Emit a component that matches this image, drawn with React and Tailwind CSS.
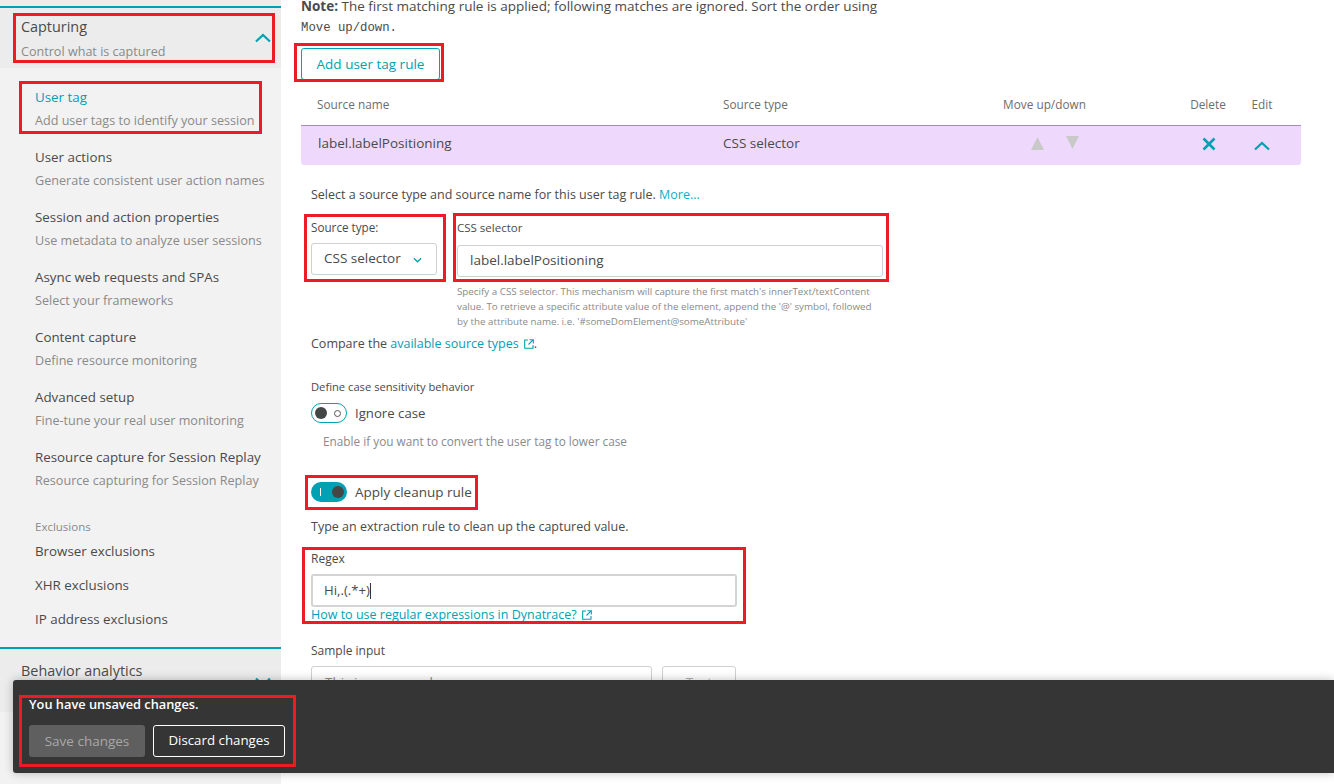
import React from "react";

const navItems = [
  ["User actions", "Generate consistent user action names"],
  ["Session and action properties", "Use metadata to analyze user sessions"],
  ["Async web requests and SPAs", "Select your frameworks"],
  ["Content capture", "Define resource monitoring"],
  ["Advanced setup", "Fine-tune your real user monitoring"],
  ["Resource capture for Session Replay", "Resource capturing for Session Replay"],
];

function Chevron({ className, down }) {
  return (
    <svg viewBox="0 0 16 10" className={className} fill="none" stroke="#00a1b2" strokeWidth="2.2">
      <path d={down ? "M1 1.5 L8 8 L15 1.5" : "M1 8.5 L8 2 L15 8.5"} />
    </svg>
  );
}

function Ext() {
  return (
    <svg viewBox="0 0 10 10" className="inline-block w-[10px] h-[10px] ml-[5px] align-[-1px]" fill="none" stroke="#00a1b2" strokeWidth="1.1">
      <path d="M4 1 H.7 V9.3 H9 V6" />
      <path d="M5.5.7 H9.3 V4.5 M9.3.7 L4.5 5.5" />
    </svg>
  );
}

function Red({ className }) {
  return <div className={"absolute border-[3px] border-[#ed1c24] pointer-events-none " + className} />;
}

export default function App() {
  return (
    <div className="relative w-[1334px] h-[784px] overflow-hidden bg-white flex font-['Open_Sans',sans-serif] text-[12.5px] text-[#4a4a4a]">
      <aside className="w-[281px] h-full shrink-0 flex flex-col bg-[#f2f2f2]">
        <div className="h-[6px] bg-[#ececec]" />
        <div className="h-[62px] bg-[#ececec] border-t-2 border-[#00a1b2] pl-[21px] pr-[10px] flex justify-between">
          <div>
            <div className="text-[14.4px] leading-[20px] mt-[9px]">Capturing</div>
            <div className="text-[12.6px] leading-[18px] mt-[6px] text-[#8a8a8a]">Control what is captured</div>
          </div>
          <Chevron className="w-[16px] h-[10px] mt-[25px]" />
        </div>
        <div className="pl-[35px] pt-[19px]">
          <div className="h-[60px] whitespace-nowrap">
            <div className="text-[13.35px] leading-[20px] text-[#00a1b2]">User tag</div>
            <div className="text-[12.6px] leading-[18px] mt-[5px] text-[#8a8a8a]">Add user tags to identify your session</div>
          </div>
          {navItems.map(([t, s]) => (
            <div key={t} className="h-[60px] whitespace-nowrap">
              <div className="text-[13.35px] leading-[20px]">{t}</div>
              <div className="text-[12.6px] leading-[18px] mt-[5px] text-[#8a8a8a]">{s}</div>
            </div>
          ))}
          <div className="text-[11.5px] leading-[16px] text-[#8a8a8a] mt-[12px]">Exclusions</div>
          <div className="mt-[6px] flex flex-col gap-[14px] text-[13.35px] leading-[20px]">
            <div>Browser exclusions</div>
            <div>XHR exclusions</div>
            <div>IP address exclusions</div>
          </div>
        </div>
        <div className="mt-[18px] h-[65px] bg-[#ececec] border-t-2 border-[#00a1b2] pl-[21px] pr-[10px] flex justify-between">
          <div className="text-[14.4px] leading-[20px] mt-[12px]">Behavior analytics</div>
          <Chevron down className="w-[16px] h-[10px] mt-[28px]" />
        </div>
      </aside>

      <main className="w-[1000px] ml-[20px] shrink-0">
        <p className="text-[13.5px] leading-[12px]"><b>Note:</b> The first matching rule is applied; following matches are ignored. Sort the order using</p>
        <p className="font-['Liberation_Mono',monospace] text-[12.3px] leading-[22px] mt-[5px]">Move up/down.</p>
        <div className="mt-[9px] w-[139px] h-[32px] border border-[#00a1b2] rounded-[3px] flex items-center justify-center text-[13.5px] text-[#00a1b2]">Add user tag rule</div>

        <div className="flex h-[45px] items-center text-[11.8px] text-[#6d6d6d] pt-[4px]">
          <div className="w-[422px] pl-[16px]">Source name</div>
          <div className="w-[279px]">Source type</div>
          <div className="w-[85px] text-center whitespace-nowrap">Move up/down</div>
          <div className="w-[100px]" />
          <div className="w-[42px] text-center">Delete</div>
          <div className="w-[66px] text-center">Edit</div>
        </div>
        <div className="flex h-[40px] items-center bg-[#eed9fd] border-t border-[#a78bbb] rounded-b-[3px] text-[13.5px] pb-[4px]">
          <div className="w-[422px] pl-[17px]">label.labelPositioning</div>
          <div className="w-[279px]">CSS selector</div>
          <div className="w-[85px] flex justify-center gap-[22px] pl-[20px]">
            <svg viewBox="0 0 13 13" className="w-[13px] h-[13px] shrink-0"><path d="M6.5 0 L13 13 H0 Z" fill="#c9c9c9" /></svg>
            <svg viewBox="0 0 13 13" className="w-[13px] h-[13px] shrink-0 -mt-[1px]"><path d="M0 0 H13 L6.5 13 Z" fill="#c9c9c9" /></svg>
          </div>
          <div className="w-[100px]" />
          <div className="w-[42px] flex justify-center pl-[2px]">
            <svg viewBox="0 0 14 14" className="w-[14px] h-[14px]" fill="none" stroke="#00a1b2" strokeWidth="2.6"><path d="M1.5 1.5 L12.5 12.5 M12.5 1.5 L1.5 12.5" /></svg>
          </div>
          <div className="w-[66px] flex justify-center"><Chevron className="w-[16px] h-[10px] mt-[4px]" /></div>
        </div>

        <div className="pl-[10px]">
          <p className="mt-[20px] leading-[20px]">Select a source type and source name for this user tag rule. <span className="text-[#00b4c8]">More...</span></p>
          <div className="flex mt-[14px] gap-[20px]">
            <div className="w-[126px]">
              <div className="text-[11.7px] leading-[16px]">Source type:</div>
              <div className="mt-[8px] h-[32px] border border-[#d0d0d0] rounded-[3px] flex items-center pl-[12px] pb-[2px] text-[13.5px] whitespace-nowrap">
                CSS selector
                <svg viewBox="0 0 10 6" className="w-[9px] h-[6px] ml-[12px] mt-[3px]" fill="none" stroke="#00a1b2" strokeWidth="1.4"><path d="M1 1 L5 5 L9 1" /></svg>
              </div>
            </div>
            <div className="w-[426px]">
              <div className="text-[11.5px] leading-[16px] mt-[1px]">CSS selector</div>
              <div className="mt-[9px] h-[32px] border border-[#d0d0d0] rounded-[3px] flex items-center pl-[12px] pb-[2px] text-[13.5px]">label.labelPositioning</div>
              <p className="mt-[7px] text-[9.8px] leading-[15px] text-[#8a8a8a] whitespace-nowrap">Specify a CSS selector. This mechanism will capture the first match's innerText/textContent<br />value. To retrieve a specific attribute value of the element, append the '@' symbol, followed<br />by the attribute name. i.e. '#someDomElement@someAttribute'</p>
            </div>
          </div>
          <p className="mt-[5px] leading-[20px]">Compare the <span className="text-[#00a1b2]">available source types</span><Ext />.</p>

          <p className="mt-[25px] text-[11.2px] leading-[16px]">Define case sensitivity behavior</p>
          <div className="flex items-center mt-[8px] h-[20px]">
            <div className="w-[36px] h-[20px] rounded-full border border-[#00a1b2] bg-white flex items-center justify-between pl-[3px] pr-[5px]">
              <span className="w-[12px] h-[12px] rounded-full bg-[#454646]" />
              <span className="w-[7px] h-[7px] rounded-full border border-[#555]" />
            </div>
            <span className="ml-[8px] mt-[2px] text-[13.2px]">Ignore case</span>
          </div>
          <p className="mt-[10px] ml-[12px] text-[11.8px] leading-[16px] text-[#8a8a8a]">Enable if you want to convert the user tag to lower case</p>

          <div className="flex items-center mt-[33px] h-[20px]">
            <div className="w-[36px] h-[20px] rounded-full bg-[#00a1b2] flex items-center justify-between pl-[9px] pr-[3px]">
              <span className="w-[1px] h-[8px] bg-white" />
              <span className="w-[12px] h-[12px] rounded-full bg-[#454646]" />
            </div>
            <span className="ml-[8px] text-[13.5px]">Apply cleanup rule</span>
          </div>
          <p className="mt-[15px] leading-[20px]">Type an extraction rule to clean up the captured value.</p>

          <p className="mt-[14px] text-[12px] leading-[16px]">Regex</p>
          <div className="mt-[7px] w-[426px] h-[33px] border-2 border-[#d4d4d4] rounded-[3px] flex items-center pl-[11px] text-[13.2px]">Hi,.(.*+)<span className="w-[1px] h-[16px] bg-[#333]" /></div>
          <p className="text-[#00a1b2] leading-[18px] mt-[-1px]">How to use regular expressions in Dynatrace?<Ext /></p>

          <p className="mt-[19px] text-[12px] leading-[16px]">Sample input</p>
          <div className="flex mt-[7px] gap-[10px]">
            <div className="w-[341px] h-[32px] border border-[#d0d0d0] rounded-[3px] flex items-center pl-[13px] text-[#8a8a8a] text-[13.5px]">This is an example</div>
            <div className="w-[74px] h-[32px] border border-[#d0d0d0] rounded-[3px] flex items-center justify-center text-[#b0b0b0] text-[13.5px]">Test</div>
          </div>
        </div>
      </main>

      <div className="absolute left-[13px] top-[680px] w-[1321px] h-[93px] bg-[#353535] rounded-l-[3px] pl-[16px] shadow-[0_0_10px_rgba(0,0,0,0.25)]">
        <p className="mt-[14px] text-[12.8px] leading-[20px] font-semibold text-white">You have unsaved changes.</p>
        <div className="flex mt-[11px] gap-[8px]">
          <div className="w-[116px] h-[32px] bg-[#5f5f5f] rounded-[3px] flex items-center justify-center text-[13.5px] text-[#a8a8a8]">Save changes</div>
          <div className="w-[132px] h-[32px] border border-white rounded-[3px] flex items-center justify-center text-[13.3px] text-white">Discard changes</div>
        </div>
      </div>

      <Red className="left-[13px] top-[13px] w-[262px] h-[50px]" />
      <Red className="left-[19px] top-[81px] w-[243px] h-[53px]" />
      <Red className="left-[294px] top-[43px] w-[150px] h-[39px]" />
      <Red className="left-[304px] top-[214px] w-[142px] h-[68px]" />
      <Red className="left-[453px] top-[213px] w-[436px] h-[69px]" />
      <Red className="left-[305px] top-[475px] w-[173px] h-[35px]" />
      <Red className="left-[302px] top-[547px] w-[444px] h-[77px]" />
      <Red className="left-[19px] top-[695px] w-[277px] h-[72px]" />
    </div>
  );
}
